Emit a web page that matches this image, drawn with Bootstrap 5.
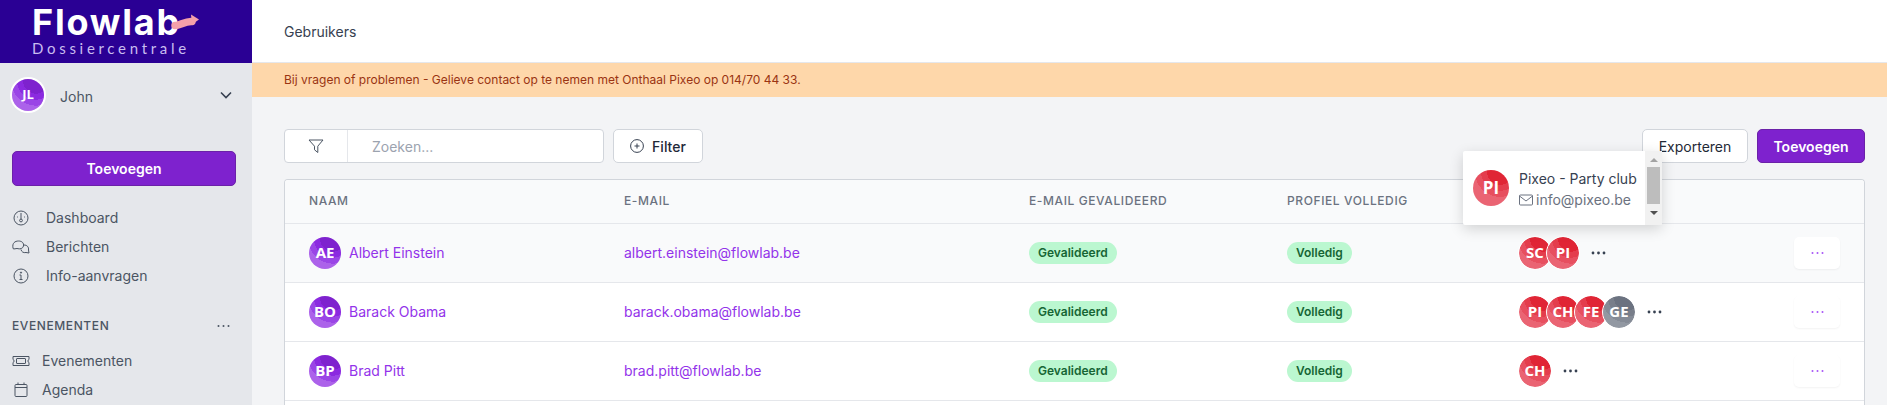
<!DOCTYPE html>
<html lang="nl">
<head>
    <meta charset="UTF-8">
    <title>Gebruikers | Flowlab</title>
    <link rel="stylesheet" href="https://cdn.jsdelivr.net/npm/bootstrap@5.3.3/dist/css/bootstrap.min.css">
    <style>
        html, body { height: 100%; overflow: hidden; }
        body { font-family: "Inter", "Liberation Sans", sans-serif; font-size: 14px; color: #374151; background: #f3f4f6; }

        /* zijbalk */
        .side { width: 252px; background: #e5e7eb; flex-shrink: 0; overflow: hidden; }
        .brand { height: 63px; background: #2a0094; padding-left: 32px; color: #fff; position: relative; flex-shrink: 0; }
        .brand-name { font-family: "Inter", sans-serif; font-weight: 700; font-size: 36px; line-height: 36px; padding-top: 4px; letter-spacing: 1.8px; }
        .brand-sub { font-family: "Lato", sans-serif; font-weight: 400; font-size: 15px; line-height: 16px; letter-spacing: 3.7px; color: #c9bdf0; }
        .brand-arrow { position: absolute; left: 168px; top: 12px; }
        .side-user { padding: 16px 12px 0; height: 88px; flex-shrink: 0; }
        .side-user-name { margin-left: 16px; margin-top: 3px; color: #4b5563; }
        .btn-paars { background: #7e22ce; border: 1px solid #6b21a8; color: #fff; font-weight: 600; font-size: 14px; height: 34px; padding: 0; border-radius: 5px; }
        .btn-paars:hover { background: #7e22ce; color: #fff; }
        .btn-side { margin: 0 16px 0 12px; width: 224px; height: 35px; flex-shrink: 0; }
        .side-nav { margin-top: 17px; }
        .side-link { height: 29px; padding-left: 12px; color: #4b5563; flex-shrink: 0; }
        .side-link svg { width: 18px; height: 18px; flex-shrink: 0; }
        .side-link .lbl-wide { margin-left: 16px; }
        .side-link .lbl { margin-left: 12px; }
        .side-head { padding: 0 22px 0 12px; margin-top: 27px; margin-bottom: 11px; font-size: 12px; font-weight: 500; letter-spacing: .6px; color: #4b5563; height: 18px; flex-shrink: 0; }

        /* bovenbalk */
        .topbar { height: 63px; background: #fff; padding-left: 32px; border-bottom: 1px solid #e5e7eb; color: #374151; font-size: 14px; flex-shrink: 0; }
        .notice { height: 34px; background: #fed7aa; padding-left: 32px; color: #9a3412; font-size: 12px; flex-shrink: 0; }

        /* inhoud */
        .page { padding: 32px 22px 0 32px; position: relative; min-height: 0; }
        .search-wrap { width: 320px; height: 34px; background: #fff; border: 1px solid #d1d5db; border-radius: 4px; }
        .search-icon { width: 63px; flex-shrink: 0; border-right: 1px solid #e5e7eb; }
        .search-input { border: 0; background: transparent; padding: 0 0 0 24px; height: 32px; font-size: 14px; box-shadow: none; }
        .search-input::placeholder { color: #9ca3af; }
        .btn-wit { background: #fff; border: 1px solid #d1d5db; color: #1f2937; font-size: 14px; font-weight: 500; height: 34px; padding: 0 16px; border-radius: 5px; }
        .btn-filter { width: 90px; margin-left: 9px; padding: 0; }
        .btn-export { width: 106px; font-weight: 400; padding: 0; }
        .btn-add { width: 108px; }
        .top-actions { gap: 9px; }

        .user-card { margin-top: 16px; background: #fff; border: 1px solid #d1d5db; border-radius: 4px 4px 0 0; border-bottom: 0; overflow: hidden; }
        .user-table { table-layout: fixed; margin: 0; width: 100%; }
        .user-table > * > tr > * { padding: 0; vertical-align: middle; border-bottom: 1px solid #e5e7eb; background: transparent; box-shadow: none; }
        .user-table thead tr { height: 43px; background: #f9fafb; }
        .user-table thead th { font-size: 12px; font-weight: 500; letter-spacing: .6px; text-transform: uppercase; color: #6b7280; }
        .user-table tbody tr { height: 59px; }
        .user-table tbody tr.row-hover { background: #f9fafb; }
        .c-naam { width: 339px; padding-left: 24px !important; }
        .c-mail { width: 405px; }
        .c-val { width: 258px; }
        .c-prof { width: 232px; }
        .c-org { width: 275px; }
        .user-table a { color: #9333ea; text-decoration: none; }

        .avatar { width: 32px; height: 32px; border-radius: 50%; color: #fff; font-family: "Open Sans", sans-serif; font-weight: 700; font-size: 15px; flex-shrink: 0; }
        .av-paars { background: radial-gradient(circle at 75% 5%, #7e22ce 0 13px, #8b2ae0 13px 19px, #9a45e6 19px 25px, #ac62ea 25px); }
        .av-rood { background: radial-gradient(circle at 75% 5%, #e02535 0 13px, #e43d4d 13px 19px, #e74f5f 19px 25px, #ea6473 25px); }
        .av-grijs { background: radial-gradient(circle at 75% 5%, #6b7280 0 13px, #787e8a 13px 19px, #858b96 19px 25px, #9298a2 25px); }
        .av-side { box-shadow: 0 0 0 2px #fff; font-size: 13px; }
        .av-stack .avatar { outline: 1px solid #fff; margin-right: -4px; }
        .av-stack .avatar:last-of-type { margin-right: 0; }
        .stack-dots { margin-left: 12px; }
        .badge-groen { background: #bbf7d0; color: #166534; font-size: 12px; font-weight: 600; line-height: 22px; height: 22px; padding: 0 9px; }
        .btn-rij { width: 46px; height: 32px; background: #fff; border-radius: 5px; box-shadow: 0 1px 2px rgba(0,0,0,.05); }

        /* popover met organisatie */
        .org-pop { position: absolute; left: 1211px; top: 54px; width: 199px; height: 74px; background: #fff; box-shadow: 0 4px 14px rgba(0,0,0,.16); z-index: 5; border-radius: 2px; }
        .org-body { padding: 0 0 0 10px; }
        .org-body .avatar { width: 36px; height: 36px; font-size: 17px; }
        .org-text { margin-left: 10px; line-height: 21px; padding-top: 2px; }
        .org-mail { color: #6b7280; gap: 3px; }
        .fake-scroll { width: 17px; background: #f1f1f1; }
        .fake-thumb { width: 13px; height: 37px; background: #bdbdbd; margin: 0 auto; }
        .tri-up { width: 0; height: 0; border: 4px solid transparent; border-bottom: 4px solid #a3a3a3; border-top: 0; margin: 7px auto 5px; }
        .tri-down { width: 0; height: 0; border: 4px solid transparent; border-top: 4px solid #505050; border-bottom: 0; margin: 7px auto 0; }
    </style>
</head>
<body>
<div class="d-flex h-100">
    <!-- zijbalk -->
    <aside class="side d-flex flex-column">
        <div class="brand">
            <div class="brand-name">Flowlab</div>
            <div class="brand-sub">Dossiercentrale</div>
            <svg class="brand-arrow" width="32" height="20" viewBox="0 0 32 20"><path d="M7 13.5 C12 13.5 17 9 24 9.5" fill="none" stroke="#f4a0aa" stroke-width="7.5" stroke-linecap="round"/><path d="M23 2.5 L31 7.5 L24 12.5 Z" fill="#f4a0aa"/></svg>
        </div>
        <div class="side-user d-flex align-items-start">
            <div class="avatar av-paars av-side d-flex align-items-center justify-content-center">JL</div>
            <span class="side-user-name pt-1">John</span>
            <svg class="ms-auto me-2 mt-2" width="12" height="16" viewBox="0 0 12 16"><path d="M1 5.5 L6 10.5 L11 5.5" fill="none" stroke="#374151" stroke-width="1.6"/></svg>
        </div>
        <button class="btn btn-paars btn-side">Toevoegen</button>
        <nav class="nav flex-column side-nav">
            <div class="side-link d-flex align-items-center">
                <svg viewBox="0 0 18 18" fill="none" stroke="#4b5563" stroke-width="1"><circle cx="9" cy="9" r="7"/><path d="M9 4 V10"/><circle cx="9" cy="11.5" r="1.4"/><path d="M5 8 h.8 M12.2 8 h.8"/></svg>
                <span class="lbl-wide">Dashboard</span>
            </div>
            <div class="side-link d-flex align-items-center">
                <svg viewBox="0 0 18 18" fill="none" stroke="#4b5563" stroke-width="1"><path d="M1 10 C0 5 3 3 6.5 3 C10 3 12 5 11.5 8 C11 10.5 8 11.5 5 10.5 L1.5 11 Z"/><path d="M12 7 C15 7 17 9 16.5 12 L17 15 L14 14.5 C11.5 15 9.5 14 9 11.5"/></svg>
                <span class="lbl-wide">Berichten</span>
            </div>
            <div class="side-link d-flex align-items-center">
                <svg viewBox="0 0 18 18" fill="none" stroke="#4b5563" stroke-width="1"><circle cx="9" cy="9" r="7"/><path d="M7.5 8 H9 V12.5 M7.5 12.5 H10.5"/><circle cx="9" cy="5.6" r=".6" fill="#4b5563"/></svg>
                <span class="lbl-wide">Info-aanvragen</span>
            </div>
        </nav>
        <div class="side-head d-flex align-items-center justify-content-between">
            <span>EVENEMENTEN</span>
            <svg width="13" height="4" viewBox="0 0 13 4" fill="#4b5563"><circle cx="1.5" cy="2" r="1"/><circle cx="6.5" cy="2" r="1"/><circle cx="11.5" cy="2" r="1"/></svg>
        </div>
        <div class="side-link d-flex align-items-center">
            <svg viewBox="0 0 18 18" fill="none" stroke="#4b5563" stroke-width="1"><path d="M1 4.5 H17 V7.5 C15.5 8 15.5 10 17 10.5 V13.5 H1 V10.5 C2.5 10 2.5 8 1 7.5 Z"/><rect x="4.5" y="6.5" width="9" height="5" rx=".5"/></svg>
            <span class="lbl">Evenementen</span>
        </div>
        <div class="side-link d-flex align-items-center">
            <svg viewBox="0 0 18 18" fill="none" stroke="#4b5563" stroke-width="1"><rect x="3" y="3.5" width="12" height="12" rx="1"/><path d="M3 6.5 H15 M6 1.5 V3.5 M12 1.5 V3.5"/></svg>
            <span class="lbl">Agenda</span>
        </div>
    </aside>

    <!-- hoofdgedeelte -->
    <div class="flex-grow-1 d-flex flex-column" style="min-width:0">
        <div class="topbar d-flex align-items-center">Gebruikers</div>
        <div class="notice d-flex align-items-center">Bij vragen of problemen - Gelieve contact op te nemen met Onthaal Pixeo op 014/70 44 33.</div>

        <div class="page flex-grow-1 d-flex flex-column">
            <div class="d-flex align-items-center">
                <div class="search-wrap d-flex">
                    <div class="search-icon d-flex align-items-center justify-content-center">
                        <svg width="16" height="16" viewBox="0 0 16 16" fill="none" stroke="#4b5563" stroke-width="1"><path d="M1 2 H15 L9.8 8.2 V14.5 L6.5 11.8 V8.2 Z"/></svg>
                    </div>
                    <input class="form-control search-input" placeholder="Zoeken...">
                </div>
                <button class="btn btn-wit btn-filter d-flex align-items-center justify-content-center gap-2">
                    <svg width="14" height="14" viewBox="0 0 14 14" fill="none" stroke="#374151" stroke-width="1"><circle cx="7" cy="7" r="6.4"/><path d="M7 4.5 V9.5 M4.5 7 H9.5"/></svg>
                    Filter
                </button>
                <div class="ms-auto d-flex top-actions">
                    <button class="btn btn-wit btn-export">Exporteren</button>
                    <button class="btn btn-paars btn-add">Toevoegen</button>
                </div>
            </div>

            <div class="org-pop d-flex">
                <div class="org-body flex-grow-1 d-flex align-items-center">
                    <div class="avatar av-rood d-flex align-items-center justify-content-center">PI</div>
                    <div class="org-text">
                        <div class="text-nowrap">Pixeo - Party club</div>
                        <div class="org-mail d-flex align-items-center">
                            <svg width="14" height="12" viewBox="0 0 14 12" fill="none" stroke="#6b7280" stroke-width="1"><rect x=".5" y="1" width="13" height="10" rx="1"/><path d="M.5 2 L7 7 L13.5 2"/></svg>
                            info@pixeo.be
                        </div>
                    </div>
                </div>
                <div class="fake-scroll">
                    <div class="tri-up"></div>
                    <div class="fake-thumb"></div>
                    <div class="tri-down"></div>
                </div>
            </div>

            <div class="user-card flex-grow-1">
                <table class="table user-table">
                    <thead>
                        <tr>
                            <th class="c-naam">Naam</th>
                            <th class="c-mail">E-mail</th>
                            <th class="c-val">E-mail gevalideerd</th>
                            <th class="c-prof">Profiel volledig</th>
                            <th class="c-org"></th>
                            <th></th>
                        </tr>
                    </thead>
                    <tbody>
                        <tr class="row-hover">
                            <td class="c-naam"><div class="d-flex align-items-center gap-2"><div class="avatar av-paars d-flex align-items-center justify-content-center">AE</div><a href="#">Albert Einstein</a></div></td>
                            <td><a href="#">albert.einstein@flowlab.be</a></td>
                            <td><span class="badge rounded-pill badge-groen">Gevalideerd</span></td>
                            <td><span class="badge rounded-pill badge-groen">Volledig</span></td>
                            <td>
                                <div class="av-stack d-flex align-items-center">
                                    <div class="avatar av-rood d-flex align-items-center justify-content-center">SC</div>
                                    <div class="avatar av-rood d-flex align-items-center justify-content-center">PI</div>
                                    <svg class="stack-dots" width="15" height="4" viewBox="0 0 15 4" fill="#374151"><circle cx="2" cy="2" r="1.4"/><circle cx="7.5" cy="2" r="1.4"/><circle cx="13" cy="2" r="1.4"/></svg>
                                </div>
                            </td>
                            <td><div class="btn-rij d-flex align-items-center justify-content-center"><svg width="13" height="4" viewBox="0 0 13 4" fill="#a855f7"><circle cx="1.5" cy="2" r="1"/><circle cx="6.5" cy="2" r="1"/><circle cx="11.5" cy="2" r="1"/></svg></div></td>
                        </tr>
                        <tr>
                            <td class="c-naam"><div class="d-flex align-items-center gap-2"><div class="avatar av-paars d-flex align-items-center justify-content-center">BO</div><a href="#">Barack Obama</a></div></td>
                            <td><a href="#">barack.obama@flowlab.be</a></td>
                            <td><span class="badge rounded-pill badge-groen">Gevalideerd</span></td>
                            <td><span class="badge rounded-pill badge-groen">Volledig</span></td>
                            <td>
                                <div class="av-stack d-flex align-items-center">
                                    <div class="avatar av-rood d-flex align-items-center justify-content-center">PI</div>
                                    <div class="avatar av-rood d-flex align-items-center justify-content-center">CH</div>
                                    <div class="avatar av-rood d-flex align-items-center justify-content-center">FE</div>
                                    <div class="avatar av-grijs d-flex align-items-center justify-content-center">GE</div>
                                    <svg class="stack-dots" width="15" height="4" viewBox="0 0 15 4" fill="#374151"><circle cx="2" cy="2" r="1.4"/><circle cx="7.5" cy="2" r="1.4"/><circle cx="13" cy="2" r="1.4"/></svg>
                                </div>
                            </td>
                            <td><div class="btn-rij d-flex align-items-center justify-content-center"><svg width="13" height="4" viewBox="0 0 13 4" fill="#a855f7"><circle cx="1.5" cy="2" r="1"/><circle cx="6.5" cy="2" r="1"/><circle cx="11.5" cy="2" r="1"/></svg></div></td>
                        </tr>
                        <tr>
                            <td class="c-naam"><div class="d-flex align-items-center gap-2"><div class="avatar av-paars d-flex align-items-center justify-content-center">BP</div><a href="#">Brad Pitt</a></div></td>
                            <td><a href="#">brad.pitt@flowlab.be</a></td>
                            <td><span class="badge rounded-pill badge-groen">Gevalideerd</span></td>
                            <td><span class="badge rounded-pill badge-groen">Volledig</span></td>
                            <td>
                                <div class="av-stack d-flex align-items-center">
                                    <div class="avatar av-rood d-flex align-items-center justify-content-center">CH</div>
                                    <svg class="stack-dots" width="15" height="4" viewBox="0 0 15 4" fill="#374151"><circle cx="2" cy="2" r="1.4"/><circle cx="7.5" cy="2" r="1.4"/><circle cx="13" cy="2" r="1.4"/></svg>
                                </div>
                            </td>
                            <td><div class="btn-rij d-flex align-items-center justify-content-center"><svg width="13" height="4" viewBox="0 0 13 4" fill="#a855f7"><circle cx="1.5" cy="2" r="1"/><circle cx="6.5" cy="2" r="1"/><circle cx="11.5" cy="2" r="1"/></svg></div></td>
                        </tr>
                    </tbody>
                </table>
            </div>
        </div>
    </div>
</div>
<script src="https://cdn.jsdelivr.net/npm/bootstrap@5.3.3/dist/js/bootstrap.bundle.min.js"></script>
</body>
</html>
